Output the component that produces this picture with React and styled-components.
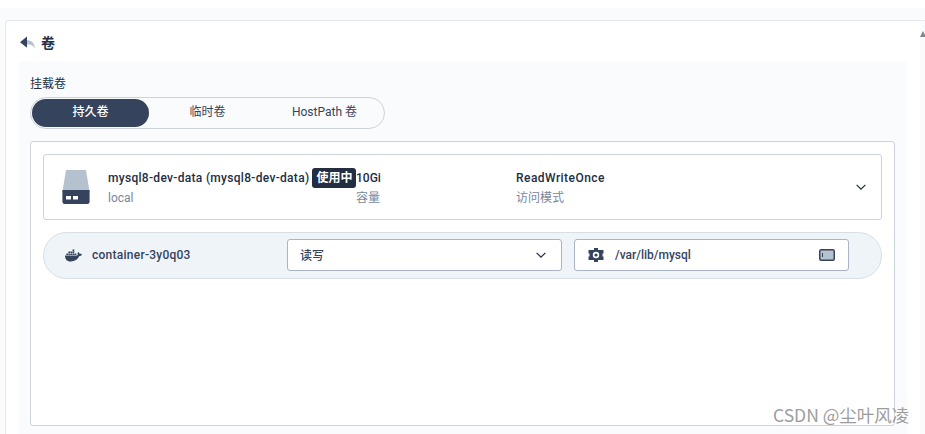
import styled, { createGlobalStyle } from "styled-components";
import { FaDocker } from "react-icons/fa";

const GlobalStyle = createGlobalStyle`
  html, body {
    margin: 0;
    padding: 0;
    background: #ffffff;
  }
  body {
    font-family: Roboto, "Noto Sans CJK SC", "Liberation Sans", sans-serif;
    font-size: 12px;
    color: #242e42;
    overflow: hidden;
  }
`;

const Page = styled.div`
  position: relative;
  width: 925px;
  height: 434px;
  box-sizing: border-box;
  padding-top: 8px;
  overflow: hidden;
`;

const Backdrop = styled.div`
  height: 426px;
  box-sizing: border-box;
  padding: 12px 0 0 5px;
  background: #f9fbfd;
`;

const Card = styled.div`
  width: 920px;
  height: 414px;
  box-sizing: border-box;
  padding: 0 17px 0 12px;
  background: linear-gradient(to right, #ffffff 914px, #f9fbfd 914px);
  border: 1px solid #e3e9ef;
  border-right: none;
  border-bottom: none;
  border-radius: 4px 0 0 0;
`;

const Header = styled.div`
  display: flex;
  align-items: center;
  gap: 5px;
  height: 40px;
  padding: 4px 0 0 2px;
  box-sizing: border-box;
`;

const HeaderTitle = styled.span`
  font-size: 14px;
  font-weight: 600;
  line-height: 20px;
  color: #242e42;
`;

const Panel = styled.div`
  width: 889px;
  height: 373px;
  box-sizing: border-box;
  padding: 15px 12px 0;
  background: #f9fbfd;
  border-radius: 4px 4px 0 0;
`;

const FieldLabel = styled.div`
  height: 16px;
  line-height: 16px;
  color: #242e42;
`;

const Tabs = styled.div`
  display: flex;
  width: 355px;
  height: 32px;
  margin-top: 5px;
  box-sizing: border-box;
  padding: 1px;
  border: 1px solid #ccd3db;
  border-radius: 16px;
`;

const Tab = styled.div`
  width: 117px;
  height: 28px;
  line-height: 27px;
  text-align: center;
  border-radius: 14px;
  font-weight: ${(p) => (p.$active ? 500 : 400)};
  color: ${(p) => (p.$active ? "#ffffff" : "#36435c")};
  background: ${(p) => (p.$active ? "#36435c" : "transparent")};
`;

const VolumeBox = styled.div`
  width: 865px;
  height: 285px;
  margin-top: 12px;
  box-sizing: border-box;
  padding: 12px;
  background: #ffffff;
  border: 1px solid #ccd3db;
  border-radius: 3px;
`;

const VolumeRow = styled.div`
  display: flex;
  align-items: center;
  height: 66px;
  box-sizing: border-box;
  padding: 0 13px 0 18px;
  background: #ffffff;
  border: 1px solid #ccd3db;
  border-radius: 3px;
`;

const VolumeIconSlot = styled.div`
  width: 46px;
  display: flex;
`;

const Info = styled.div`
  display: flex;
  flex-direction: column;
  gap: 2px;
  width: ${(p) => p.$width}px;
  flex: none;
  padding-bottom: 1px;
`;

const InfoTop = styled.div`
  display: flex;
  align-items: center;
  height: 20px;
  font-weight: 500;
  line-height: 16px;
  letter-spacing: ${(p) => p.$spacing || 0}px;
  color: #242e42;
  white-space: nowrap;
`;

const InfoSub = styled.div`
  line-height: 16px;
  color: #79879c;
`;

const Badge = styled.span`
  display: inline-block;
  height: 20px;
  line-height: 20px;
  padding: 0 4px;
  margin-left: 3px;
  border-radius: 3px;
  background: #242e42;
  color: #ffffff;
  font-weight: 600;
  letter-spacing: 0;
`;

const Expand = styled.div`
  margin-left: auto;
  display: flex;
`;

const ContainerRow = styled.div`
  display: flex;
  align-items: center;
  height: 47px;
  margin-top: 12px;
  box-sizing: border-box;
  padding: 0 32px 1px 21px;
  background: #eff4f9;
  border: 1px solid #d8dee5;
  border-radius: 24px;
`;

const ContainerName = styled.div`
  display: flex;
  align-items: center;
  gap: 10px;
  width: 222px;
  font-weight: 500;
  letter-spacing: 0.25px;
  color: #36435c;
`;

const Control = styled.div`
  display: flex;
  align-items: center;
  width: 275px;
  height: 32px;
  box-sizing: border-box;
  background: #ffffff;
  border: 1px solid #abb4c4;
  border-radius: 3px;
  color: #36435c;
  font-weight: 500;
`;

const SelectControl = styled(Control)`
  justify-content: space-between;
  padding: 0 7px 0 12px;
  margin-right: 12px;
`;

const SelectValue = styled.span`
  margin-bottom: 2px;
`;

const PathControl = styled(Control)`
  gap: 11px;
  padding: 0 13px 0 13px;
`;

const PathText = styled.span`
  flex: 1;
`;

const SelectChevron = styled.span`
  display: flex;
  margin-right: 6px;
`;

const Watermark = styled.div`
  position: absolute;
  left: 773px;
  top: 403px;
  font-family: "Noto Sans CJK SC", "Liberation Sans", sans-serif;
  font-size: 17.5px;
  line-height: 24px;
  white-space: nowrap;
  color: #8c8c8c;
  opacity: 0.85;
`;

const ScrollArrow = styled.div`
  position: absolute;
  left: 920px;
  top: 31px;
  width: 0;
  height: 0;
  border-left: 3px solid transparent;
  border-right: 3px solid transparent;
  border-bottom: 6px solid #80858c;
`;

function BackIcon() {
  return (
    <svg width="16" height="14" viewBox="0 0 16 14">
      <path d="M7 4.2c4.4 0 7.6 2.6 8 8.3-1.6-3-4-4.2-8-4.2z" fill="#b6c1cf" />
      <path d="M0 6.2 7 .6v11.2z" fill="#36435c" />
    </svg>
  );
}

function DiskIcon() {
  return (
    <svg width="28" height="34" viewBox="0 0 28 34">
      <path d="M4 0h20l3.600 22H.4z" fill="#b6c1cf" />
      <path d="M.4 20h27.200v11.500a2.500 2.500 0 0 1-2.500 2.500H2.900a2.500 2.500 0 0 1-2.500-2.500z" fill="#36435c" />
      <rect x="4" y="26" width="5" height="3.500" fill="#ffffff" />
      <rect x="11" y="26" width="5" height="3.500" fill="#ffffff" />
    </svg>
  );
}

function Chevron() {
  return (
    <svg width="14" height="14" viewBox="0 0 16 16" fill="none">
      <path d="M3 5.500 8 10.500 13 5.500" stroke="#242e42" strokeWidth="1.400" />
    </svg>
  );
}

function GearIcon() {
  return (
    <svg width="16" height="16" viewBox="0 0 16 16">
      <path d="M6 1h4v2h5.500v3.500h-1v3h1V13H10v2H6v-2H.5V9.500h1v-3h-1V3H6z" fill="#36435c" />
      <circle cx="8" cy="8" r="3.200" fill="#ffffff" />
      <circle cx="8" cy="8" r="1.600" fill="#36435c" />
    </svg>
  );
}

function DiskSmallIcon() {
  return (
    <svg width="16" height="12" viewBox="0 0 16 12">
      <rect x=".75" y=".75" width="14.500" height="10.500" rx="1.500" fill="#b6c1cf" stroke="#36435c" strokeWidth="1.500" />
      <rect x="3" y="4" width="1" height="4" fill="#36435c" />
    </svg>
  );
}

export default function App() {
  return (
    <Page>
      <GlobalStyle />
      <Backdrop>
        <Card>
          <Header>
            <BackIcon />
            <HeaderTitle>卷</HeaderTitle>
          </Header>
          <Panel>
            <FieldLabel>挂载卷</FieldLabel>
            <Tabs>
              <Tab $active>持久卷</Tab>
              <Tab>临时卷</Tab>
              <Tab>HostPath 卷</Tab>
            </Tabs>
            <VolumeBox>
              <VolumeRow>
                <VolumeIconSlot>
                  <DiskIcon />
                </VolumeIconSlot>
                <Info $width={248}>
                  <InfoTop $spacing={0.3}>
                    mysql8-dev-data (mysql8-dev-data)
                    <Badge>使用中</Badge>
                  </InfoTop>
                  <InfoSub>local</InfoSub>
                </Info>
                <Info $width={160}>
                  <InfoTop>10Gi</InfoTop>
                  <InfoSub>容量</InfoSub>
                </Info>
                <Info $width={200}>
                  <InfoTop $spacing={0.45}>ReadWriteOnce</InfoTop>
                  <InfoSub>访问模式</InfoSub>
                </Info>
                <Expand>
                  <Chevron />
                </Expand>
              </VolumeRow>
              <ContainerRow>
                <ContainerName>
                  <FaDocker size={17} color="#36435c" />
                  container-3y0q03
                </ContainerName>
                <SelectControl>
                  <SelectValue>读写</SelectValue>
                  <SelectChevron>
                    <Chevron />
                  </SelectChevron>
                </SelectControl>
                <PathControl>
                  <GearIcon />
                  <PathText>/var/lib/mysql</PathText>
                  <DiskSmallIcon />
                </PathControl>
              </ContainerRow>
            </VolumeBox>
          </Panel>
        </Card>
      </Backdrop>
      <ScrollArrow />
      <Watermark>CSDN @尘叶风凌</Watermark>
    </Page>
  );
}
